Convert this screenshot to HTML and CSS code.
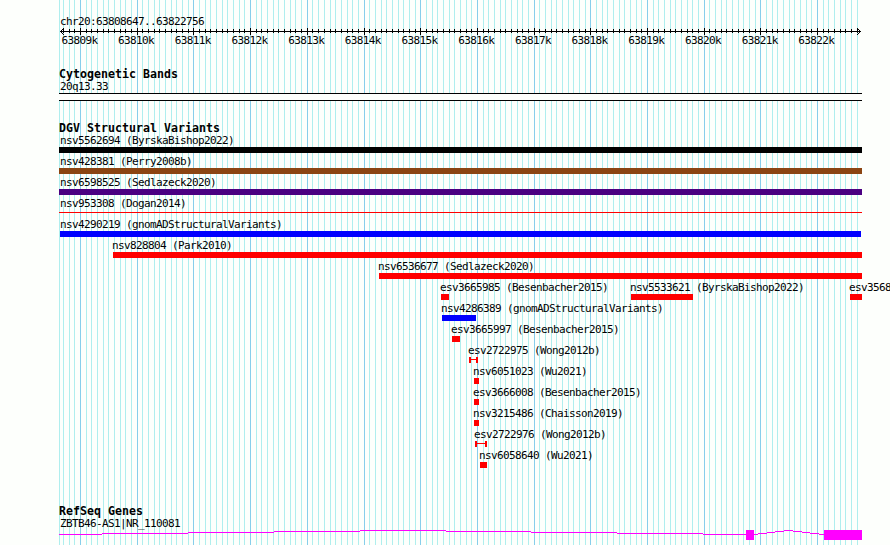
FILE: index.html
```html
<!DOCTYPE html>
<html lang="en">
<head>
<meta charset="utf-8">
<title>chr20:63808647..63822756</title>
<link rel="stylesheet" href="styles.css">
</head>
<body>
<svg class="gridlines" width="890" height="545" aria-hidden="true">
  <path id="minor" class="minor"/>
  <path id="major" class="major"/>
</svg>
<main class="browser">
  <header class="ruler">
    <div class="label">chr20:63808647..63822756</div>
    <svg class="axis" width="803" height="9" aria-hidden="true">
      <path d="M1 4.5H802M2 3.5h1M2 5.5h1M3 2.5h1M3 6.5h1M4 1.5h1M4 7.5h1M800 3.5h1M800 5.5h1M799 2.5h1M799 6.5h1M798 1.5h1M798 7.5h1"/>
      <path id="ticks"/>
    </svg>
    <div class="coords">
      <span>63809k</span><span>63810k</span><span>63811k</span><span>63812k</span><span>63813k</span><span>63814k</span><span>63815k</span><span>63816k</span><span>63817k</span><span>63818k</span><span>63819k</span><span>63820k</span><span>63821k</span><span>63822k</span>
    </div>
  </header>

  <section class="track cyto">
    <h2>Cytogenetic Bands</h2>
    <div class="label">20q13.33</div>
    <div class="band"></div>
  </section>

  <section class="track variants">
    <h2>DGV Structural Variants</h2>
    <div class="row"><div class="feature full black"><div class="label">nsv5562694 (ByrskaBishop2022)</div><i class="bar"></i></div></div>
    <div class="row"><div class="feature full brown"><div class="label">nsv428381 (Perry2008b)</div><i class="bar"></i></div></div>
    <div class="row"><div class="feature full indigo"><div class="label">nsv6598525 (Sedlazeck2020)</div><i class="bar"></i></div></div>
    <div class="row"><div class="feature full"><div class="label">nsv953308 (Dogan2014)</div><i class="bar line"></i></div></div>
    <div class="row"><div class="feature full blue"><div class="label">nsv4290219 (gnomADStructuralVariants)</div><i class="bar inset"></i></div></div>
    <div class="row"><div class="feature" style="--x:54px;--w:749px"><div class="label">nsv828804 (Park2010)</div><i class="bar"></i></div></div>
    <div class="row"><div class="feature" style="--x:320px;--w:483px"><div class="label">nsv6536677 (Sedlazeck2020)</div><i class="bar"></i></div></div>
    <div class="row">
      <div class="feature" style="--x:382px;--w:8px"><div class="label">esv3665985 (Besenbacher2015)</div><i class="bar"></i></div>
      <div class="feature" style="--x:572px;--w:62px"><div class="label">nsv5533621 (ByrskaBishop2022)</div><i class="bar"></i></div>
      <div class="feature" style="--x:791px;--w:12px"><div class="label">esv3568</div><i class="bar"></i></div>
    </div>
    <div class="row"><div class="feature blue" style="--x:383px;--w:34px"><div class="label">nsv4286389 (gnomADStructuralVariants)</div><i class="bar"></i></div></div>
    <div class="row"><div class="feature" style="--x:393px;--w:8px"><div class="label">esv3665997 (Besenbacher2015)</div><i class="bar"></i></div></div>
    <div class="row"><div class="feature" style="--x:410px;--w:9px"><div class="label">esv2722975 (Wong2012b)</div><i class="bar span"></i></div></div>
    <div class="row"><div class="feature" style="--x:415px;--w:5px"><div class="label">nsv6051023 (Wu2021)</div><i class="bar"></i></div></div>
    <div class="row"><div class="feature" style="--x:415px;--w:5px"><div class="label">esv3666008 (Besenbacher2015)</div><i class="bar"></i></div></div>
    <div class="row"><div class="feature" style="--x:415px;--w:5px"><div class="label">nsv3215486 (Chaisson2019)</div><i class="bar"></i></div></div>
    <div class="row"><div class="feature" style="--x:416px;--w:12px"><div class="label">esv2722976 (Wong2012b)</div><i class="bar span"></i></div></div>
    <div class="row"><div class="feature" style="--x:421px;--w:7px"><div class="label">nsv6058640 (Wu2021)</div><i class="bar"></i></div></div>
  </section>

  <section class="track genes">
    <h2>RefSeq Genes</h2>
    <div class="label">ZBTB46-AS1|NR_110081</div>
    <svg class="gene" width="803" height="10" aria-hidden="true">
      <path class="intron" d="M0 4.5H43M43 3.5H129M129 2.5H215M215 1.5H301M301 .5H387M387 1.5H472M472 2.5H558M558 3.5H644M644 4.5H687M695 4.5H699M699 3.5H708M708 2.5H716M716 1.5H725M725 .5H734M734 1.5H743M743 2.5H751M751 3.5H760M760 4.5H765"/>
      <path class="exon" d="M687 0h8v10h-8zM765 0h38v10h-38z"/>
    </svg>
  </section>
</main>
<script src="ruler.js"></script>
</body>
</html>
```
FILE: styles.css
```css
* { box-sizing: border-box; }
body {
  margin: 0;
  width: 890px;
  height: 545px;
  overflow: hidden;
  background: #fdfffc;
  color: #000;
  font: 11px/12px "DejaVu Sans Mono", monospace;
  letter-spacing: -0.622px;
}
.gridlines { position: absolute; inset: 0; z-index: -1; }
svg { display: block; shape-rendering: crispEdges; }
svg path { fill: none; stroke-width: 1; }
.minor { stroke: #afeeee; }
.major { stroke: #87ceeb; }
.browser { padding: 15px 0 0 59px; }
.ruler { height: 53px; }
.label { height: 13px; padding: 1px 0 0 1px; white-space: pre; }
.axis { width: 803px; height: 9px; margin-top: -1px; }
.axis path { stroke: #000; }
.coords {
  display: grid;
  grid-template-columns: repeat(14, 56.7px);
  margin: -1px 0 0 2.4px;
}
h2 {
  margin: 0;
  height: 12px;
  font-size: 11.6px;
  line-height: 12px;
  font-weight: bold;
  letter-spacing: 0.016px;
  white-space: pre;
}
.cyto { height: 54px; }
.band {
  width: 803px;
  height: 8px;
  border: solid #000;
  border-width: 1px 0;
  background: #fdfffc;
}
.variants { height: 383px; }
.row { display: grid; height: 21px; }
.feature {
  --x: 0px;
  --w: 803px;
  grid-area: 1 / 1;
  margin-left: var(--x);
  color: red;
}
.feature .label { color: #000; padding-left: 0; margin-left: -1px; }
.feature.full .label { padding-left: 1px; margin-left: 0; }
.bar { display: block; width: var(--w); height: 6px; background: currentColor; }
.black { color: #000; }
.brown { color: #8b4513; }
.indigo { color: #4b0082; }
.blue { color: #00f; }
.line { height: 1px; margin-top: 2px; }
.inset { width: 801px; margin-left: 1px; }
.span {
  border: solid red;
  border-width: 0 2px;
  background: linear-gradient(red, red) 0 2px / 100% 1px no-repeat;
}
.intron { stroke: #f0f; }
svg .exon { fill: #f0f; }
```
FILE: ruler.js
```js
// One grid line and one tick per 100 bp, a longer one per 1000 bp.
const start = 63808647, scale = 800 / 14109;
let minor = "", major = "", ticks = "";
for (let bp = 63808700; bp < 63822756; bp += 100) {
  const x = Math.round(60 + (bp - start) * scale) + 0.5;
  const line = `M${x} 0V545`;
  if (bp % 1000) {
    minor += line;
    ticks += `M${x - 59} 2V6`;
  } else {
    major += line;
    ticks += `M${x - 59} 1V8`;
  }
}
minor += "M59.5 0V545";
document.getElementById("minor").setAttribute("d", minor);
document.getElementById("major").setAttribute("d", major);
document.getElementById("ticks").setAttribute("d", ticks);
```
